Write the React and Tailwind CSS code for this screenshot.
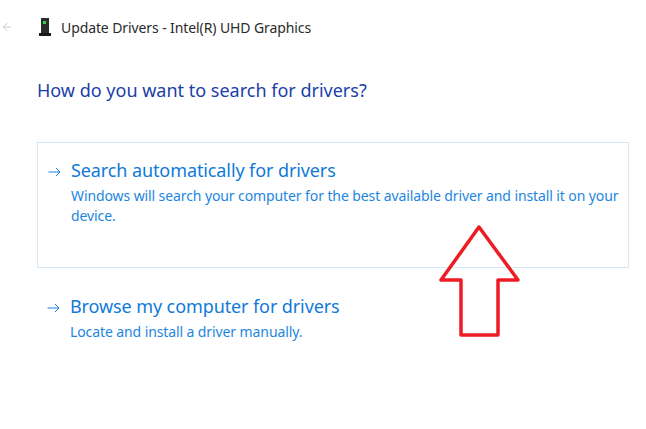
import { ArrowLeft } from 'lucide-react';

function SmallArrow() {
  return (
    <svg width="13" height="10" viewBox="0 0 13 10" fill="none" stroke="#1a83dc" strokeWidth="1" className="shrink-0">
      <path d="M0.5 5H12M8 1l4 4-4 4" />
    </svg>
  );
}

function Option({ title, children }) {
  return (
    <div className="flex">
      <div className="w-[33px] pl-[10px] pt-[10px]">
        <SmallArrow />
      </div>
      <div className="flex-1">
        <div className="text-[18px] leading-[26px] text-[#0f7ad8] tracking-[-0.1px]">{title}</div>
        <div className="mt-[3px] text-[14px] leading-[20px] text-[#1c86e0] tracking-[-0.1px]">{children}</div>
      </div>
    </div>
  );
}

export default function App() {
  return (
    <div className="relative h-[429px] w-[646px] overflow-hidden bg-white font-['Noto_Sans',sans-serif]">
      {/* title bar */}
      <div className="flex h-[54px] items-center">
        <ArrowLeft size={12} strokeWidth={1.5} className="ml-[1px] text-[#bdbdbd]" />
        <svg width="14" height="18" viewBox="0 0 14 18" className="ml-[25px]">
          <rect x="3" y="0" width="8" height="15" fill="#2b2b2b" />
          <rect x="1" y="15" width="12" height="3" fill="#1a1a1a" />
          <rect x="5" y="3" width="3" height="3" fill="#35d04a" />
        </svg>
        <span className="ml-[9px] text-[14px] text-[#2a2a2a] tracking-[-0.1px]">Update Drivers - Intel(R) UHD Graphics</span>
      </div>

      <div className="pl-[37px] pr-[17px]">
        <h1 className="mt-[22px] text-[18px] leading-[28px] text-[#1a3fa8]">How do you want to search for drivers?</h1>

        <div className="mt-[38px] h-[126px] border border-[#d5e8f8] pt-[14px] pr-[4px]">
          <Option title="Search automatically for drivers">
            Windows will search your computer for the best available driver and install it on your device.
          </Option>
        </div>

        <div className="mt-[25px] pr-[4px]">
          <Option title="Browse my computer for drivers">Locate and install a driver manually.</Option>
        </div>
      </div>

      {/* red annotation arrow */}
      <svg width="646" height="429" className="absolute left-0 top-0" fill="none">
        <path d="M479 227L441 280H461V335H498V280H518Z" stroke="#ed1c24" strokeWidth="3.5" strokeLinejoin="round" />
      </svg>
    </div>
  );
}
